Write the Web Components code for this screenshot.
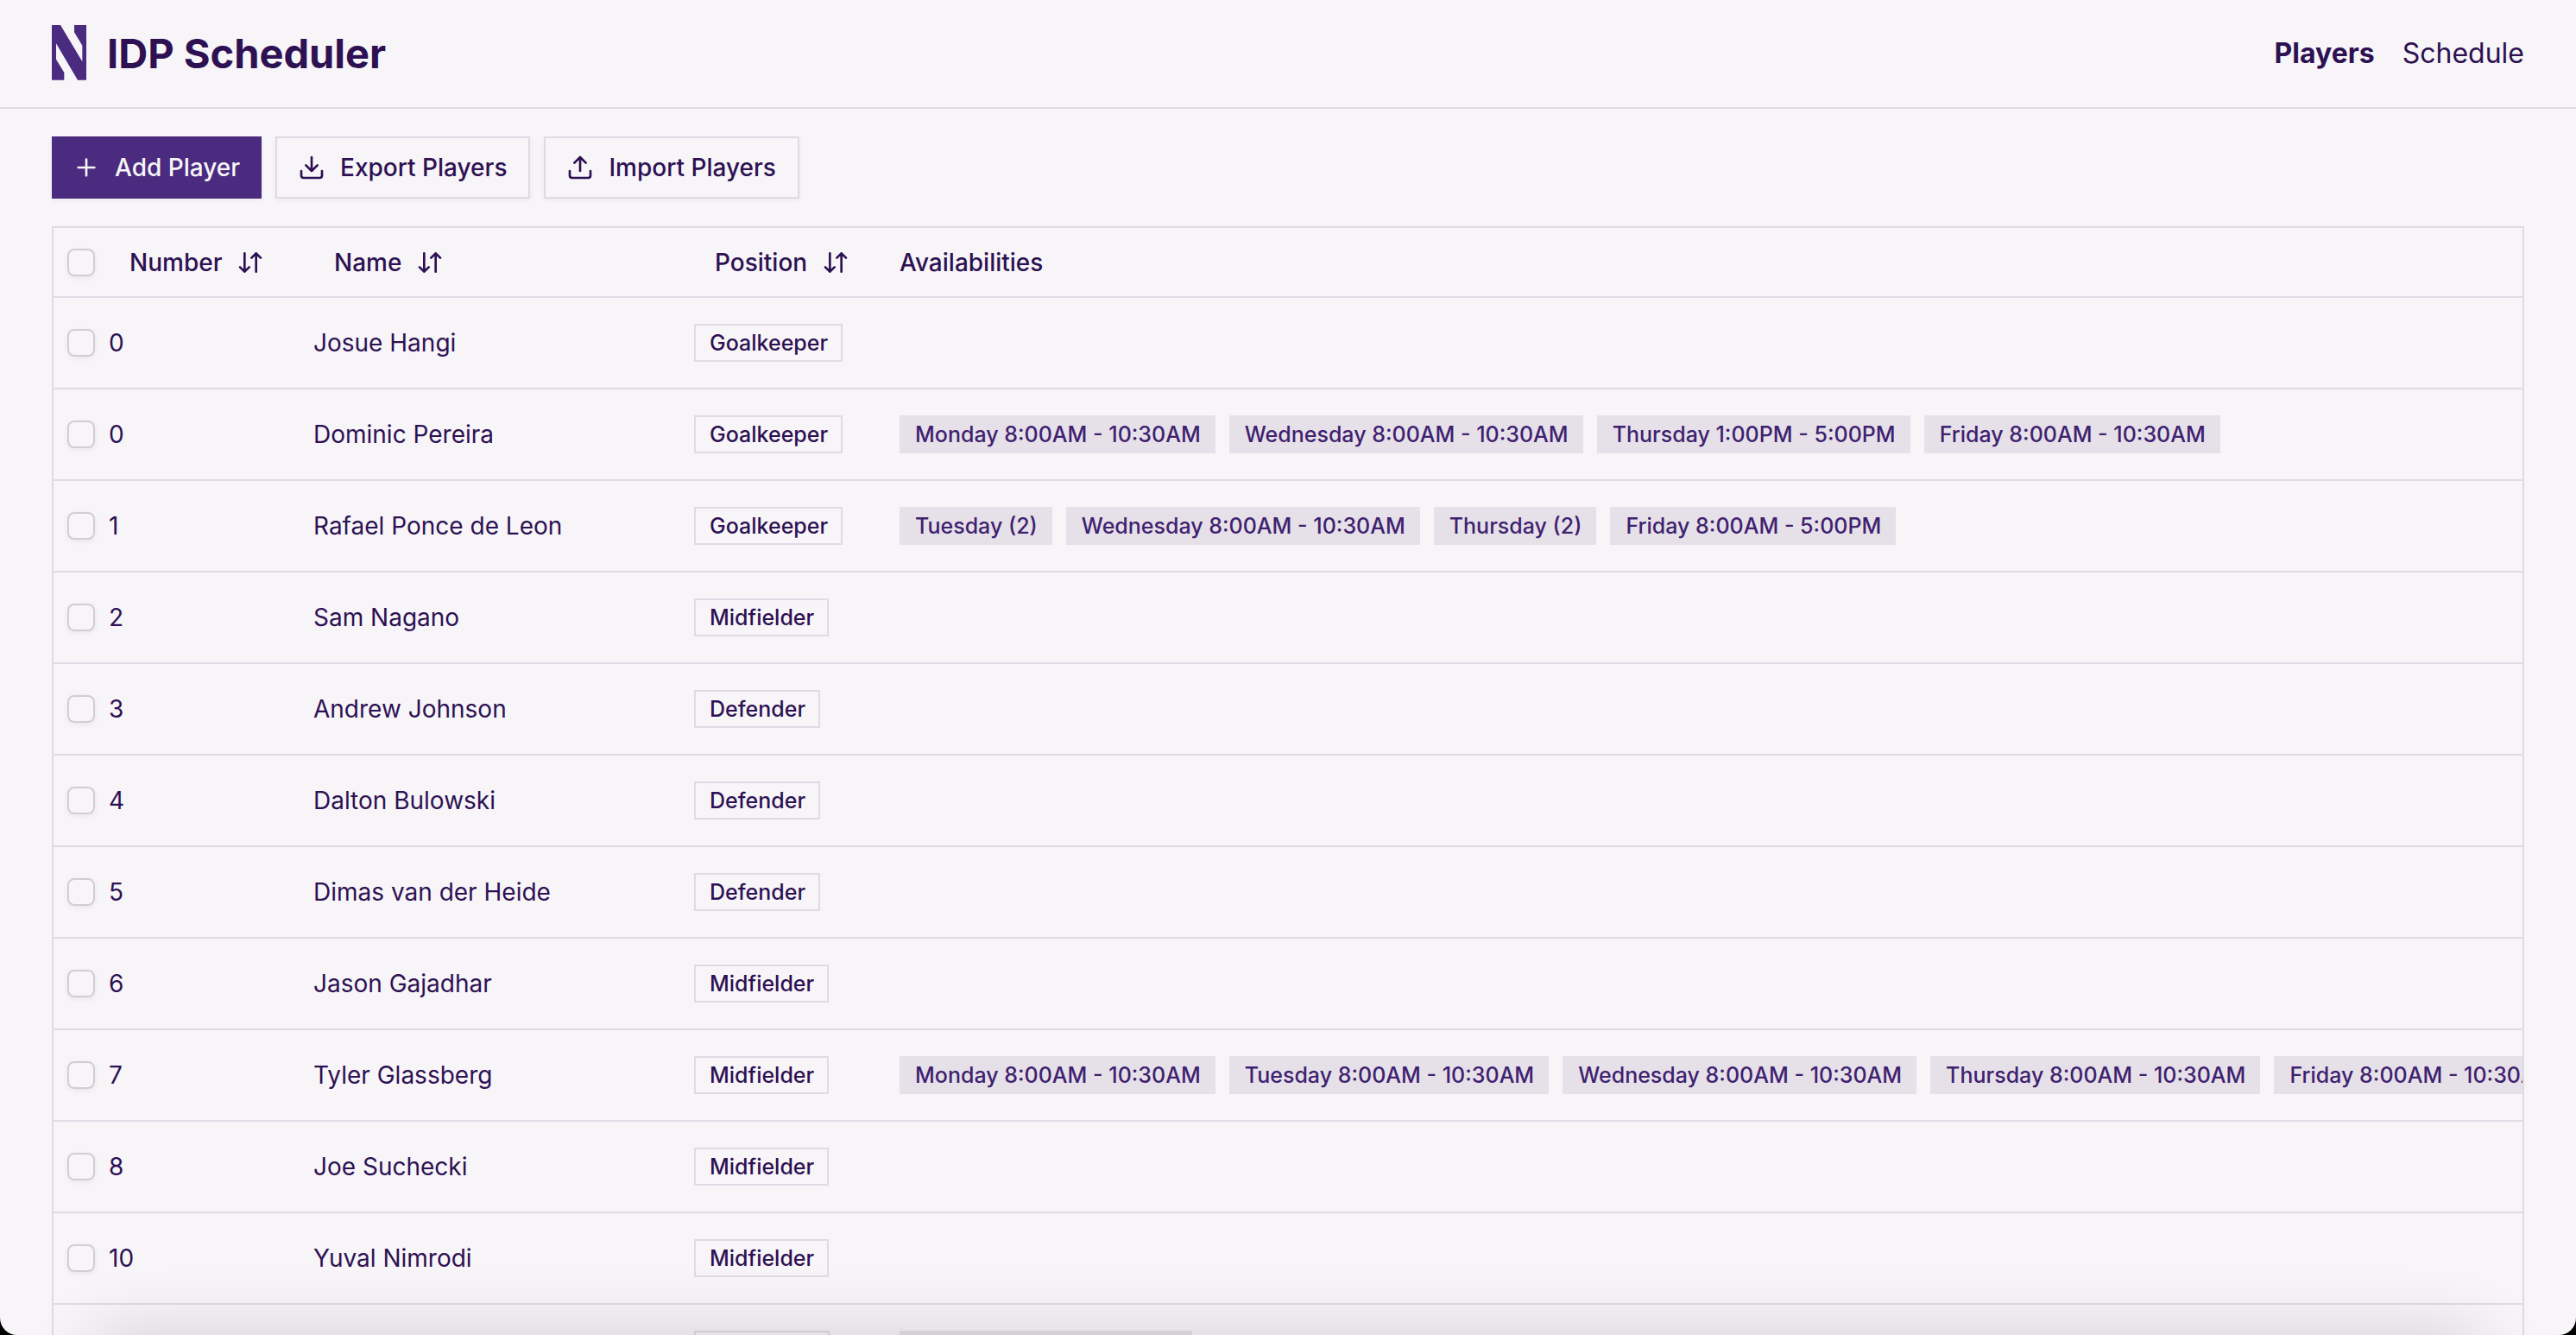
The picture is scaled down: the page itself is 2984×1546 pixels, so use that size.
<!DOCTYPE html>
<html lang="en">
<head>
<meta charset="utf-8">
<title>IDP Scheduler</title>
<style>
  :root {
    --bg: #f7f5f8;
    --fg: #2d1153;
    --primary: #4a2b7f;
    --line: #dedbe4;
    --tag: #e6e1e9;
    --tag-fg: #3f2170;
  }
  html { background: #000; }
  body {
    margin: 0;
    color: var(--fg);
    font-family: Inter, "Liberation Sans", sans-serif;
    font-size: 28px;
    line-height: 40px;
  }
</style>
</head>
<body>
<app-shell>
  <site-header slot="header">
    <nav-link href="#players" current>Players</nav-link>
    <nav-link href="#schedule">Schedule</nav-link>
  </site-header>
  <action-button icon="plus" primary slot="actions">Add Player</action-button>
  <action-button icon="download" slot="actions">Export Players</action-button>
  <action-button icon="upload" slot="actions">Import Players</action-button>
  <player-table></player-table>
</app-shell>
<script>
const ICONS = {
  plus: '<path d="M5 12h14M12 5v14"/>',
  download: '<path d="M21 15v4a2 2 0 0 1-2 2H5a2 2 0 0 1-2-2v-4M7 10l5 5 5-5M12 15V3"/>',
  upload: '<path d="M21 15v4a2 2 0 0 1-2 2H5a2 2 0 0 1-2-2v-4M17 8l-5-5-5 5M12 3v12"/>',
  sort: '<path d="M3 16l4 4 4-4M7 20V4M21 8l-4-4-4 4M17 4v16"/>'
};

class Base extends HTMLElement {
  connectedCallback() {
    if (this.shadowRoot) return;
    this.attachShadow({ mode: 'open' }).innerHTML = this.render();
  }
}

customElements.define('app-shell', class extends Base {
  render() {
    return `<style>
      :host { display: flex; flex-direction: column; height: 100vh; overflow: hidden;
        background: var(--bg); border-radius: 0 0 20px 20px; }
      main { display: flex; flex-direction: column; gap: 32px; padding: 32px 60px 0; min-height: 0; }
      .actions { display: flex; gap: 16px; }
      .edge { position: fixed; left: 110px; right: 110px; top: 100vh; height: 80px;
        box-shadow: 0 0 80px rgba(0, 0, 0, .16); }
    </style>
    <slot name="header"></slot>
    <main><div class="actions"><slot name="actions"></slot></div><slot></slot></main>
    <div class="edge"></div>`;
  }
});

customElements.define('site-header', class extends Base {
  render() {
    return `<style>
      :host { display: block; flex: none; border-bottom: 2px solid var(--line); }
      header { display: flex; align-items: center; justify-content: space-between; height: 124px; padding: 0 60px; }
      .brand { display: flex; align-items: center; gap: 24px; }
      svg { width: 40px; height: 66px; fill: var(--primary); }
      h1 { margin: 0; font-size: 47px; line-height: 64px; font-weight: 700; }
      nav { display: flex; gap: 32px; }
    </style>
    <header>
      <div class="brand">
        <svg viewBox="0 0 120 198" aria-hidden="true"><path d="M0 0H30L106 127V71L78 25V0H120V191H90L15 64V119L43 165V191H0Z"/></svg>
        <h1>IDP Scheduler</h1>
      </div>
      <nav><slot></slot></nav>
    </header>`;
  }
});

customElements.define('nav-link', class extends Base {
  render() {
    return `<style>
      :host { display: block; }
      a { color: inherit; text-decoration: none; font-size: 32px; line-height: 48px; }
      :host([current]) a { font-weight: 700; }
    </style><a href="${this.getAttribute('href')}"><slot></slot></a>`;
  }
});

customElements.define('ui-icon', class extends Base {
  render() {
    return `<style>
      :host { display: block; flex: none; width: 32px; height: 32px; }
      svg { display: block; width: 100%; height: 100%; fill: none; stroke: currentColor;
        stroke-width: 2; stroke-linecap: round; stroke-linejoin: round; }
    </style><svg viewBox="0 0 24 24" aria-hidden="true">${ICONS[this.getAttribute('name')]}</svg>`;
  }
});

customElements.define('action-button', class extends Base {
  render() {
    return `<style>
      :host { display: block; }
      button { display: flex; align-items: center; gap: 17px; height: 72px; padding: 0 25px 0 24px;
        box-sizing: border-box; border: 2px solid var(--line); background: var(--bg); color: var(--fg);
        font: inherit; font-weight: 500; box-shadow: 0 2px 6px rgba(0, 0, 0, .05); cursor: pointer; }
      :host([primary]) button { border: 0; background: var(--primary); color: var(--bg); }
    </style><button type="button"><ui-icon name="${this.getAttribute('icon')}"></ui-icon><slot></slot></button>`;
  }
});

customElements.define('position-badge', class extends Base {
  render() {
    return `<style>
      :host { display: block; width: max-content; box-sizing: border-box; height: 44px; padding: 4px 15px 4px 16px;
        border: 2px solid var(--line); font-size: 25px; line-height: 32px; font-weight: 500; white-space: nowrap; }
    </style><slot></slot>`;
  }
});

customElements.define('time-tag', class extends Base {
  render() {
    return `<style>
      :host { display: block; flex: none; box-sizing: border-box; height: 44px; padding: 6px 17px 6px 18px;
        background: var(--tag); color: var(--tag-fg); font-size: 25px; line-height: 32px; font-weight: 500; white-space: nowrap; }
    </style><slot></slot>`;
  }
});

const PLAYERS = [
  [0, 'Josue Hangi', 'Goalkeeper', []],
  [0, 'Dominic Pereira', 'Goalkeeper', ['Monday 8:00AM - 10:30AM', 'Wednesday 8:00AM - 10:30AM', 'Thursday 1:00PM - 5:00PM', 'Friday 8:00AM - 10:30AM']],
  [1, 'Rafael Ponce de Leon', 'Goalkeeper', ['Tuesday (2)', 'Wednesday 8:00AM - 10:30AM', 'Thursday (2)', 'Friday 8:00AM - 5:00PM']],
  [2, 'Sam Nagano', 'Midfielder', []],
  [3, 'Andrew Johnson', 'Defender', []],
  [4, 'Dalton Bulowski', 'Defender', []],
  [5, 'Dimas van der Heide', 'Defender', []],
  [6, 'Jason Gajadhar', 'Midfielder', []],
  [7, 'Tyler Glassberg', 'Midfielder', ['Monday 8:00AM - 10:30AM', 'Tuesday 8:00AM - 10:30AM', 'Wednesday 8:00AM - 10:30AM', 'Thursday 8:00AM - 10:30AM', 'Friday 8:00AM - 10:30AM']],
  [8, 'Joe Suchecki', 'Midfielder', []],
  [10, 'Yuval Nimrodi', 'Midfielder', []]
];

customElements.define('player-table', class extends Base {
  render() {
    const sort = label => `<th scope="col"><button type="button">${label}<ui-icon name="sort"></ui-icon></button></th>`;
    const rows = PLAYERS.map(([number, name, position, times]) => `<tr>
      <td class="check"><input type="checkbox" aria-label="Select ${name}"></td>
      <td>${number}</td><td>${name}</td>
      <td><position-badge>${position}</position-badge></td>
      <td><div class="times">${times.map(t => `<time-tag>${t}</time-tag>`).join('')}</div></td></tr>`).join('');
    return `<style>
      :host { display: block; flex: none; border: 2px solid var(--line); overflow: hidden; }
      table { width: 100%; table-layout: fixed; border-collapse: separate; border-spacing: 0; }
      .c-check { width: 48px; } .c-number { width: 237px; } .c-name { width: 441px; } .c-position { width: 238px; }
      th, td { padding: 0 16px; text-align: left; vertical-align: middle; border-bottom: 2px solid var(--line); white-space: nowrap; }
      th { height: 79px; font-weight: 500; }
      td { height: 104px; }
      .check { padding-right: 0; }
      input { appearance: none; display: block; box-sizing: border-box; width: 32px; height: 32px; margin: 0;
        border: 2px solid #d0ced5; border-radius: 8px; box-shadow: 0 2px 6px rgba(0, 0, 0, .06); }
      button { display: flex; align-items: center; gap: 17px; padding: 0 24px; border: 0; background: none;
        color: inherit; font: inherit; cursor: pointer; }
      .times { display: flex; gap: 16px; }
      .next position-badge { width: 157px; }
      .next time-tag { width: 339px; }
    </style>
    <table>
      <colgroup><col class="c-check"><col class="c-number"><col class="c-name"><col class="c-position"><col></colgroup>
      <thead><tr><th class="check"><input type="checkbox" aria-label="Select all"></th>
        ${sort('Number')}${sort('Name')}${sort('Position')}<th scope="col">Availabilities</th></tr></thead>
      <tbody>${rows}
        <tr class="next"><td class="check"><input type="checkbox" aria-label="Select player"></td><td></td><td></td>
          <td><position-badge></position-badge></td><td><div class="times"><time-tag></time-tag></div></td></tr>
      </tbody>
    </table>`;
  }
});
</script>
</body>
</html>
